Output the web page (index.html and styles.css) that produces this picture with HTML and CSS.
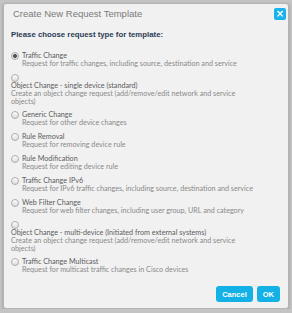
FILE: index.html
```html
<!DOCTYPE html>
<html lang="en">
  <head>
    <meta charset="UTF-8" />
    <title>Create New Request Template</title>
    <link rel="stylesheet" href="styles.css">
  </head>
  <body>
    <div class="dialog">
      <div class="dialog-header">
        <span class="dialog-title">Create New Request Template</span>
        <button class="close-btn" type="button">&times;</button>
      </div>

      <div class="dialog-body">
        <h2>Please choose request type for template:</h2>

        <div class="options">
          <label class="option">
            <input type="radio" name="type" checked />
            <span class="option-text">
              <span class="option-name">Traffic Change</span>
              <span class="option-desc">Request for traffic changes, including source, destination and service</span>
            </span>
          </label>

          <label class="option stacked">
            <input type="radio" name="type" />
            <span class="option-text">
              <span class="option-name">Object Change - single device (standard)</span>
              <span class="option-desc">Create an object change request (add/remove/edit network and service<br>objects)</span>
            </span>
          </label>

          <label class="option">
            <input type="radio" name="type" />
            <span class="option-text">
              <span class="option-name">Generic Change</span>
              <span class="option-desc">Request for other device changes</span>
            </span>
          </label>

          <label class="option">
            <input type="radio" name="type" />
            <span class="option-text">
              <span class="option-name">Rule Removal</span>
              <span class="option-desc">Request for removing device rule</span>
            </span>
          </label>

          <label class="option">
            <input type="radio" name="type" />
            <span class="option-text">
              <span class="option-name">Rule Modification</span>
              <span class="option-desc">Request for editing device rule</span>
            </span>
          </label>

          <label class="option">
            <input type="radio" name="type" />
            <span class="option-text">
              <span class="option-name">Traffic Change IPv6</span>
              <span class="option-desc">Request for IPv6 traffic changes, including source, destination and service</span>
            </span>
          </label>

          <label class="option">
            <input type="radio" name="type" />
            <span class="option-text">
              <span class="option-name">Web Filter Change</span>
              <span class="option-desc">Request for web filter changes, including user group, URL and category</span>
            </span>
          </label>

          <label class="option stacked">
            <input type="radio" name="type" />
            <span class="option-text">
              <span class="option-name">Object Change - multi-device (Initiated from external systems)</span>
              <span class="option-desc">Create an object change request (add/remove/edit network and service<br>objects)</span>
            </span>
          </label>

          <label class="option">
            <input type="radio" name="type" />
            <span class="option-text">
              <span class="option-name">Traffic Change Multicast</span>
              <span class="option-desc">Request for multicast traffic changes in Cisco devices</span>
            </span>
          </label>
        </div>
      </div>

      <div class="dialog-footer">
        <button class="btn" type="button">Cancel</button>
        <button class="btn" type="button">OK</button>
      </div>
    </div>
  </body>
</html>
```

FILE: styles.css
```css
body {
  margin: 0;
  padding: 3px 3px 0;
  background: #c4c4c4;
  font-family: "Liberation Sans", Arial, sans-serif;
}
.dialog {
  width: 284px;
  height: 304px;
  background: #f1f1f1;
  border: 1px solid #b4b4b4;
  border-radius: 3px;
  box-shadow: 0 1px 3px rgba(0, 0, 0, 0.25);
  display: flex;
  flex-direction: column;
}
.dialog-header {
  display: flex;
  justify-content: space-between;
  align-items: flex-start;
  padding: 4px 2px 0 9px;
}
.dialog-title {
  font-size: 9.5px;
  color: #7b7b7b;
  line-height: 12px;
}
.close-btn {
  width: 12px;
  height: 12px;
  padding: 0;
  border: none;
  border-radius: 2px;
  background: #17b3ea;
  color: white;
  font-family: "DejaVu Sans", sans-serif;
  font-weight: bold;
  font-size: 10px;
  line-height: 12px;
  text-align: center;
}
.dialog-body {
  flex: 1;
  padding: 0 10px 0 7px;
}
h2 {
  margin: 10px 0 12px;
  font-size: 7.8px;
  line-height: 10px;
  color: #2b3c56;
}
.options {
  font-family: Lato, "Open Sans", sans-serif;
  font-size: 7.2px;
  line-height: 8px;
  font-weight: normal;
}
.option {
  display: flex;
  align-items: flex-start;
  margin-bottom: 6px;
}
.option.stacked {
  flex-direction: column;
  margin-bottom: 5px;
}
.option input {
  appearance: none;
  width: 8px;
  height: 8px;
  margin: 0 3px 0 0;
  border: 1px solid #adadad;
  border-radius: 50%;
  background: linear-gradient(#fdfdfd, #dcdcdc);
  box-sizing: border-box;
  flex: none;
}
.option input:checked {
  background: radial-gradient(circle, #555 0, #555 1.6px, #e2e2e2 2.2px);
}
.option-text {
  display: flex;
  flex-direction: column;
}
.option-name {
  color: #5c5c5c;
  font-weight: 400;
}
.option-desc {
  color: #8a8a8a;
}
.dialog-footer {
  display: flex;
  justify-content: flex-end;
  gap: 4px;
  padding: 0 8px 6px 0;
}
.btn {
  height: 16px;
  padding: 0 6px;
  border: none;
  border-radius: 3px;
  background: #13b1e5;
  color: white;
  font-family: "Liberation Sans", Arial, sans-serif;
  font-size: 7.5px;
  font-weight: bold;
}
```
